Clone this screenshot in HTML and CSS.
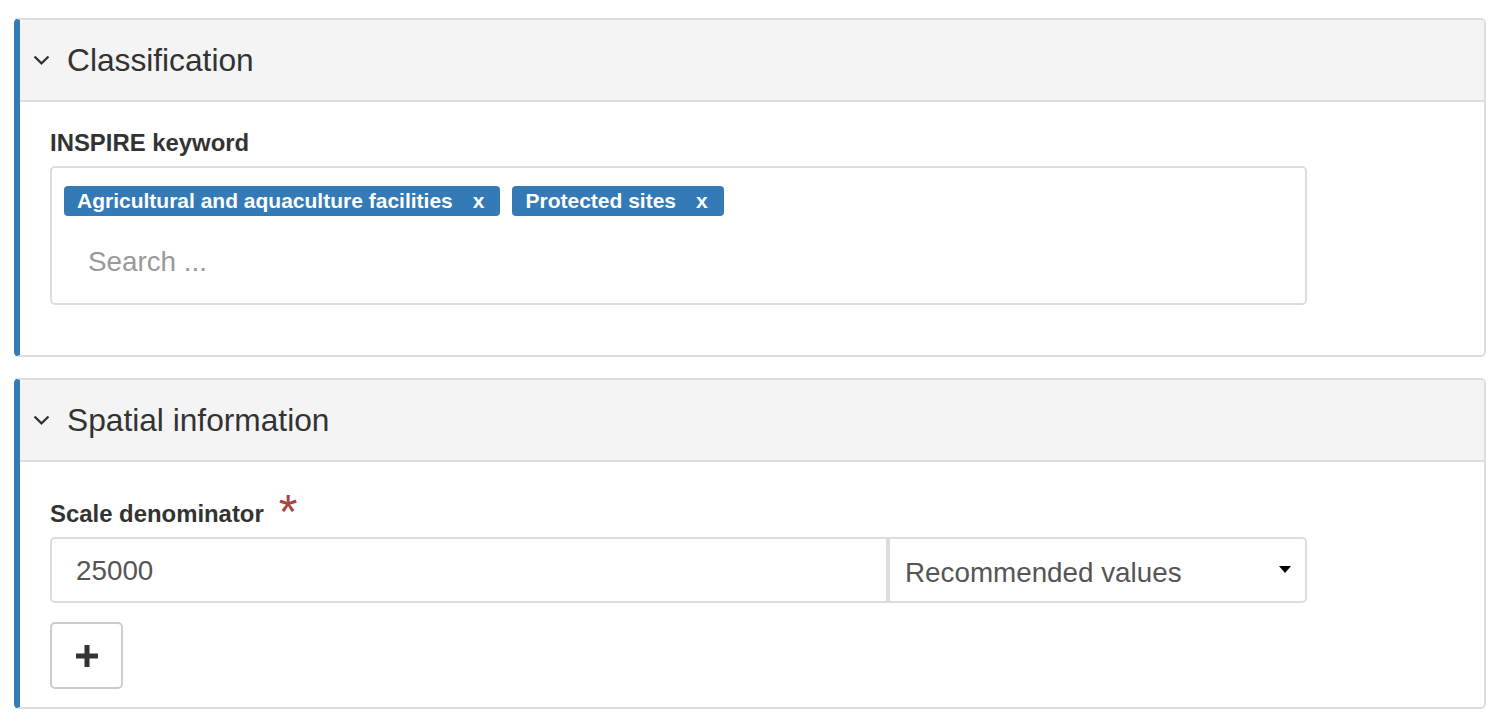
FILE: index.html
```html
<!DOCTYPE html>
<html lang="en">
<head>
<meta charset="utf-8">
<title>Metadata editor</title>
<link rel="stylesheet" href="styles.css">
</head>
<body>
<div class="panel">
  <div class="panel-heading">
    <svg class="chevron" width="17" height="10" viewBox="0 0 17 10"><path d="M1.5 1.5 L8.5 8.3 L15.5 1.5" fill="none" stroke="#333" stroke-width="2.3"/></svg>
    <span class="panel-title">Classification</span>
  </div>
  <div class="panel-body">
    <div class="form-group">
      <label class="field-label">INSPIRE keyword</label>
      <div class="tag-box">
        <div class="tags">
          <span class="tag">Agricultural and aquaculture facilities<span class="tag-remove">x</span></span>
          <span class="tag">Protected sites<span class="tag-remove">x</span></span>
        </div>
        <div class="search">Search ...</div>
      </div>
    </div>
  </div>
</div>

<div class="panel panel-second">
  <div class="panel-heading">
    <svg class="chevron" width="17" height="10" viewBox="0 0 17 10"><path d="M1.5 1.5 L8.5 8.3 L15.5 1.5" fill="none" stroke="#333" stroke-width="2.3"/></svg>
    <span class="panel-title">Spatial information</span>
  </div>
  <div class="panel-body panel-body-bottom">
    <div class="form-group form-group-required">
      <label class="field-label">Scale denominator<span class="required">*</span></label>
      <div class="input-group">
        <div class="text-input">25000</div>
        <div class="select">
          <span>Recommended values</span>
          <span class="caret"></span>
        </div>
      </div>
      <button class="add-btn" type="button">
        <svg width="22" height="22" viewBox="0 0 22 22"><path d="M11 0 V22 M0 11 H22" stroke="#333" stroke-width="5"/></svg>
      </button>
    </div>
  </div>
</div>
</body>
</html>
```

FILE: styles.css
```css
* { box-sizing: border-box; }

body {
  margin: 0;
  padding: 18px 24px 0 14px;
  background: #fff;
  font-family: "Liberation Sans", Arial, sans-serif;
  color: #333;
}

.panel {
  border: 2px solid #ddd;
  border-left: 6px solid #337ab7;
  border-radius: 5px;
  background: #fff;
}

.panel-second {
  margin-top: 21px;
}

.panel-heading {
  height: 82px;
  background: #f4f4f4;
  border-bottom: 2px solid #ddd;
  display: flex;
  align-items: center;
  padding-left: 13px;
  border-radius: 3px 3px 0 0;
}

.chevron {
  display: block;
  margin-right: 17px;
}

.panel-title {
  font-size: 31.7px;
  color: #333;
}

.panel-body {
  padding: 24px 177px 50px 30px;
}

.panel-body-bottom {
  padding-bottom: 18px;
}

.form-group-required {
  padding-top: 11px;
}

.field-label {
  display: block;
  font-weight: bold;
  font-size: 23.9px;
  line-height: 34px;
  margin-bottom: 6px;
}

.required {
  color: #a94442;
  font-size: 48px;
  font-weight: normal;
  line-height: 0;
  margin-left: 15px;
  vertical-align: -6px;
}

.tag-box {
  border: 2px solid #ddd;
  border-radius: 5px;
  padding: 18px 12px 15px;
}

.tags {
  display: flex;
  gap: 12px;
}

.tag {
  display: inline-flex;
  align-items: center;
  height: 30px;
  padding: 0 16px 0 13px;
  background: #337ab7;
  color: #fff;
  font-weight: bold;
  font-size: 21px;
  border-radius: 4px;
}

.tag-remove {
  margin-left: 20px;
}

.search {
  margin-top: 20px;
  height: 52px;
  line-height: 52px;
  padding-left: 24px;
  font-size: 27.8px;
  color: #999;
}

.input-group {
  display: flex;
  height: 66px;
}

.text-input {
  flex: 1;
  border: 2px solid #ddd;
  border-radius: 5px 0 0 5px;
  padding: 1px 0 0 24px;
  display: flex;
  align-items: center;
  font-size: 27.8px;
  color: #555;
}

.select {
  flex: 0 0 419px;
  border: 2px solid #ddd;
  border-radius: 0 5px 5px 0;
  padding: 5px 14px 0 15px;
  display: flex;
  align-items: center;
  justify-content: space-between;
  font-size: 27.8px;
  color: #555;
}

.caret {
  width: 0;
  height: 0;
  border-top: 7px solid #000;
  border-left: 6.5px solid transparent;
  border-right: 6.5px solid transparent;
  margin-top: -7px;
}

.add-btn {
  display: flex;
  align-items: center;
  justify-content: center;
  margin-top: 19px;
  width: 73px;
  height: 67px;
  padding: 0;
  background: #fff;
  border: 2px solid #ccc;
  border-radius: 5px;
}
```
